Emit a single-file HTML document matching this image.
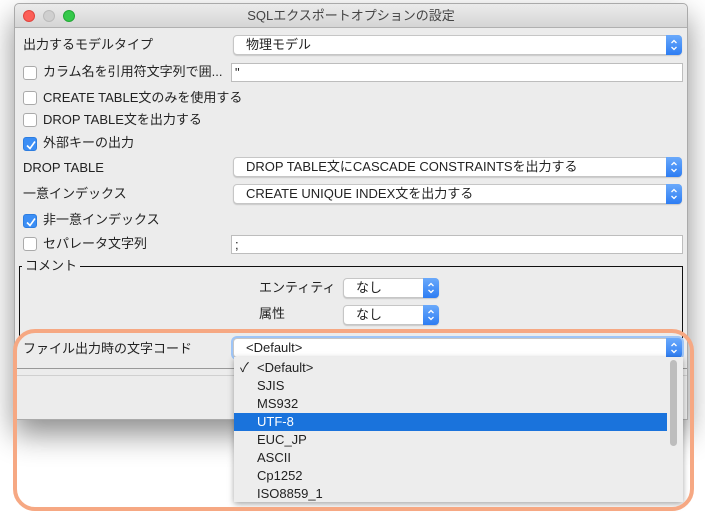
<!DOCTYPE html>
<html><head><meta charset="utf-8"><style>
*{box-sizing:border-box}
body{margin:0;width:705px;height:518px;background:#fff;position:relative;overflow:hidden;font-family:"Liberation Sans","Noto Sans CJK JP",sans-serif;font-size:13px;color:#222}
.win{position:absolute;left:14px;top:3px;width:674px;height:417px;background:#ececec;border:1px solid #aaa;border-radius:5px 5px 0 0;box-shadow:0 14px 30px rgba(0,0,0,.45)}
.tb{position:absolute;left:0;top:0;right:0;height:24px;background:linear-gradient(#ebebeb,#d5d5d5);border-bottom:1px solid #b0b0b0;border-radius:5px 5px 0 0;text-align:center;line-height:24px;color:#444;font-size:13px}
.dot{position:absolute;top:6px;width:12px;height:12px;border-radius:50%}
.a{position:absolute;white-space:nowrap;line-height:16px;height:16px}
.cb{position:absolute;width:14px;height:14px;border:1px solid #aaa;border-radius:3px;background:#fff}
.cb.on{background:#3b8ef5;border-color:#2d7de0}
.cb.on svg{position:absolute;left:1px;top:1px}
.combo{position:absolute;height:20px;background:#fff;border:1px solid #c6c6c6;border-radius:4px;box-shadow:0 1px 1px rgba(0,0,0,.15);padding-left:12px;padding-top:1px;line-height:16px}
.combo .arr{position:absolute;right:-1px;top:-1px;width:16px;height:20px;background:linear-gradient(#6aa9fb,#2d7df3);border-radius:0 4px 4px 0}
.combo .arr svg{position:absolute;left:4px;top:3px}
.tf{position:absolute;height:19px;background:#fff;border:1px solid #bdbdbd;padding-left:3px;line-height:17px}
.list{position:absolute;left:234px;top:357px;width:449px;height:145px;background:#ededed;box-shadow:0 2px 6px rgba(0,0,0,.35);overflow:hidden}
.it{height:18px;line-height:18px;padding-left:23px;position:relative}
.sel{background:#1a73dc;color:#fff}
.orange{position:absolute;left:13px;top:329px;width:681px;height:182px;border:4px solid #f6a883;border-radius:22px}
</style></head><body>
<div class="win">
<div class="tb">SQLエクスポートオプションの設定
<div class="dot" style="left:8px;background:#fc5f57;border:1px solid #e0443e"></div>
<div class="dot" style="left:28px;background:#cfcfcf;border:1px solid #bbb"></div>
<div class="dot" style="left:48px;background:#35c94a;border:1px solid #23a836"></div>
</div>
</div>
<svg width="0" height="0" style="position:absolute"><defs><symbol id="ar" viewBox="0 0 8 14"><path d="M1.5 5 L4 2.5 L6.5 5 M1.5 9 L4 11.5 L6.5 9" fill="none" stroke="#fff" stroke-width="1.3"/></symbol><symbol id="ck" viewBox="0 0 12 12"><path d="M2 6.5 L5 9.5 L10 2.5" fill="none" stroke="#fff" stroke-width="1.6"/></symbol></defs></svg>
<div class="a" style="left:23px;top:37px">出力するモデルタイプ</div>
<div class="combo" style="left:233px;top:35px;width:449px">物理モデル<div class="arr"><svg width="8" height="14"><use href="#ar"/></svg></div></div>
<div class="cb" style="left:23px;top:66px"></div><div class="a" style="left:43px;top:64px">カラム名を引用符文字列で囲...</div>
<div class="tf" style="left:231px;top:63px;width:452px">"</div>
<div class="cb" style="left:23px;top:91px"></div><div class="a" style="left:43px;top:90px">CREATE TABLE文のみを使用する</div>
<div class="cb" style="left:23px;top:113px"></div><div class="a" style="left:43px;top:112px">DROP TABLE文を出力する</div>
<div class="cb on" style="left:23px;top:137px"><svg width="12" height="12"><use href="#ck"/></svg></div><div class="a" style="left:43px;top:135px">外部キーの出力</div>
<div class="a" style="left:23px;top:160px">DROP TABLE</div>
<div class="combo" style="left:233px;top:157px;width:449px">DROP TABLE文にCASCADE CONSTRAINTSを出力する<div class="arr"><svg width="8" height="14"><use href="#ar"/></svg></div></div>
<div class="a" style="left:23px;top:186px">一意インデックス</div>
<div class="combo" style="left:233px;top:184px;width:449px">CREATE UNIQUE INDEX文を出力する<div class="arr"><svg width="8" height="14"><use href="#ar"/></svg></div></div>
<div class="cb on" style="left:23px;top:214px"><svg width="12" height="12"><use href="#ck"/></svg></div><div class="a" style="left:43px;top:212px">非一意インデックス</div>
<div class="cb" style="left:23px;top:237px"></div><div class="a" style="left:43px;top:236px">セパレータ文字列</div>
<div class="tf" style="left:231px;top:235px;width:452px">;</div>
<div style="position:absolute;left:19px;top:266px;width:664px;height:72px;border:1px solid #111;border-bottom:none"></div>
<div class="a" style="left:22px;top:258px;background:#ececec;padding:0 3px">コメント</div>
<div class="a" style="left:259px;top:280px">エンティティ</div>
<div class="combo" style="left:343px;top:278px;width:96px">なし<div class="arr"><svg width="8" height="14"><use href="#ar"/></svg></div></div>
<div class="a" style="left:259px;top:306px">属性</div>
<div class="combo" style="left:343px;top:305px;width:96px">なし<div class="arr"><svg width="8" height="14"><use href="#ar"/></svg></div></div>
<div class="a" style="left:23px;top:341px">ファイル出力時の文字コード</div>
<div style="position:absolute;left:15px;top:368px;width:672px;border-top:1px solid #999"></div>
<div style="position:absolute;left:15px;top:375px;width:672px;border-top:1px solid #d0d0d0"></div>
<div class="combo" style="left:233px;top:338px;width:449px;box-shadow:0 0 0 2px #9ec5f7">&lt;Default&gt;<div class="arr"><svg width="8" height="14"><use href="#ar"/></svg></div></div>
<div class="list">
<div style="height:2px"></div>
<div class="it"><span style="position:absolute;left:6px">✓</span>&lt;Default&gt;</div>
<div class="it">SJIS</div><div class="it">MS932</div>
<div class="it sel" style="margin-right:16px">UTF-8</div>
<div class="it">EUC_JP</div><div class="it">ASCII</div><div class="it">Cp1252</div><div class="it">ISO8859_1</div>
<div style="position:absolute;left:436px;top:3px;width:7px;height:86px;background:#bdbdbd;border-radius:4px"></div>
</div>
<div class="orange"></div>
</body></html>
